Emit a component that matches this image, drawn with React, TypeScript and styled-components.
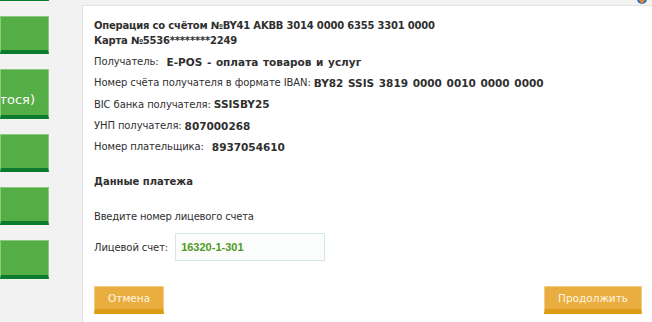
import React from 'react'
import styled, { createGlobalStyle } from 'styled-components'

const GlobalStyle = createGlobalStyle`
  html, body {
    margin: 0;
    padding: 0;
    background: #f2f2f2;
    overflow: hidden;
  }
  * {
    box-sizing: border-box;
  }
`

const COLORS = {
  TEXT: '#2f2f2f',
  GREEN: '#55ad45',
  GREEN_LIGHT: '#8acb7c',
  GREEN_DARK: '#0b7b2d',
  ORANGE: '#e9ae3f',
  ORANGE_DARK: '#df9b14',
  ORANGE_LIGHT: '#f3cb82',
}

const INFO_ROWS = [
  { label: 'Получатель:', value: 'E-POS - оплата товаров и услуг', wide: true },
  { label: 'Номер счёта получателя в формате IBAN:', value: 'BY82 SSIS 3819 0000 0010 0000 0000' },
  { label: 'BIC банка получателя:', value: 'SSISBY25' },
  { label: 'УНП получателя:', value: '807000268' },
  { label: 'Номер плательщика:', value: '8937054610', wide: true },
]

const TILES = [
  { height: 38 },
  { height: 38 },
  { height: 50, text: 'тося)' },
  { height: 38 },
  { height: 38 },
  { height: 39 },
]

const App = () => {
  return (
    <>
      <GlobalStyle />
      <Page>
        <Sidebar>
          {TILES.map((tile, i) => (
            <Tile key={i} $height={tile.height}>
              {tile.text && <TileText>{tile.text}</TileText>}
            </Tile>
          ))}
        </Sidebar>

        <Panel>
          <Title>
            Операция со счётом №BY41 AKBB 3014 0000 6355 3301 0000
            <br />
            Карта №5536********2249
          </Title>

          <InfoList>
            {INFO_ROWS.map((row) => (
              <InfoRow key={row.label}>
                <Label>{row.label}</Label>
                <Value $wide={row.wide}>{row.value}</Value>
              </InfoRow>
            ))}
          </InfoList>

          <SectionTitle>Данные платежа</SectionTitle>
          <Hint>Введите номер лицевого счета</Hint>

          <FieldRow>
            <Label>Лицевой счет:</Label>
            <Input defaultValue="16320-1-301" />
          </FieldRow>

          <Actions>
            <ActionButton>Отмена</ActionButton>
            <ActionButton>Продолжить</ActionButton>
          </Actions>
        </Panel>

        <CornerIcon width="12" height="8" viewBox="0 0 12 8">
          <circle cx="6" cy="-1" r="5" fill="#2f6fc2" />
          <path d="M3 0 L6 4 L9 0 Z" fill="#e08a2a" />
        </CornerIcon>
      </Page>
    </>
  )
}

export default App

const Page = styled.div`
  position: relative;
  display: flex;
  align-items: flex-start;
  height: 322px;
  overflow: hidden;
  font-family: 'DejaVu Sans', Verdana, sans-serif;
  color: ${COLORS.TEXT};
`

const Sidebar = styled.div`
  display: flex;
  flex-direction: column;
  gap: 15px;
  width: 49px;
  flex-shrink: 0;
  margin-top: -37px;
`

const Tile = styled.div<{ $height: number }>`
  display: flex;
  align-items: flex-end;
  justify-content: flex-end;
  height: ${({ $height }) => $height}px;
  padding: 0 13px 7px 0;
  overflow: hidden;
  background: ${COLORS.GREEN};
  border: 1px solid ${COLORS.GREEN_LIGHT};
  border-bottom: 4px solid ${COLORS.GREEN_DARK};
`

const TileText = styled.span`
  white-space: nowrap;
  font-size: 13px;
  line-height: 16px;
  color: #ffffff;
`

const Panel = styled.div`
  flex: 1;
  min-height: 340px;
  margin: 5px 0 0 33px;
  padding: 12px 10px 0 11px;
  background: #ffffff;
  border: 1px solid #e2e2e2;
  border-right: none;
`

const Title = styled.div`
  font-size: 10px;
  font-weight: bold;
  line-height: 15px;
  letter-spacing: -0.2px;
`

const InfoList = styled.div`
  display: flex;
  flex-direction: column;
  margin-top: 3px;
`

const InfoRow = styled.div`
  display: flex;
  align-items: center;
  height: 21.3px;
  font-size: 10px;
`

const Label = styled.span`
  font-size: 10px;
  letter-spacing: -0.1px;
  white-space: nowrap;
`

const Value = styled.span<{ $wide?: boolean }>`
  margin-left: ${({ $wide }) => ($wide ? '8px' : '3px')};
  font-size: 10.5px;
  font-weight: bold;
  word-spacing: 1px;
  white-space: nowrap;
`

const SectionTitle = styled.div`
  margin-top: 17px;
  font-size: 10px;
  font-weight: bold;
  line-height: 15px;
`

const Hint = styled.div`
  margin-top: 20px;
  font-size: 10px;
  line-height: 15px;
  letter-spacing: -0.2px;
`

const FieldRow = styled.div`
  display: flex;
  align-items: center;
  gap: 7px;
  margin-top: 9px;
`

const Input = styled.input`
  width: 150px;
  height: 28px;
  padding: 0 5px;
  border: 1px solid #d6e9df;
  outline: none;
  background: #fbfdfc;
  font-family: 'Liberation Sans', Arial, sans-serif;
  font-size: 11px;
  font-weight: bold;
  color: #4d9a1c;
`

const Actions = styled.div`
  display: flex;
  justify-content: space-between;
  margin-top: 25px;
`

const ActionButton = styled.button`
  height: 28px;
  padding: 0 13px 1px;
  background: ${COLORS.ORANGE};
  border: 1px solid ${COLORS.ORANGE_LIGHT};
  border-bottom: 5px solid ${COLORS.ORANGE_DARK};
  font-family: 'DejaVu Sans', Verdana, sans-serif;
  font-size: 10.5px;
  color: #fff6e2;
  cursor: pointer;
`

const CornerIcon = styled.svg`
  position: absolute;
  top: 0;
  right: 4px;
`
